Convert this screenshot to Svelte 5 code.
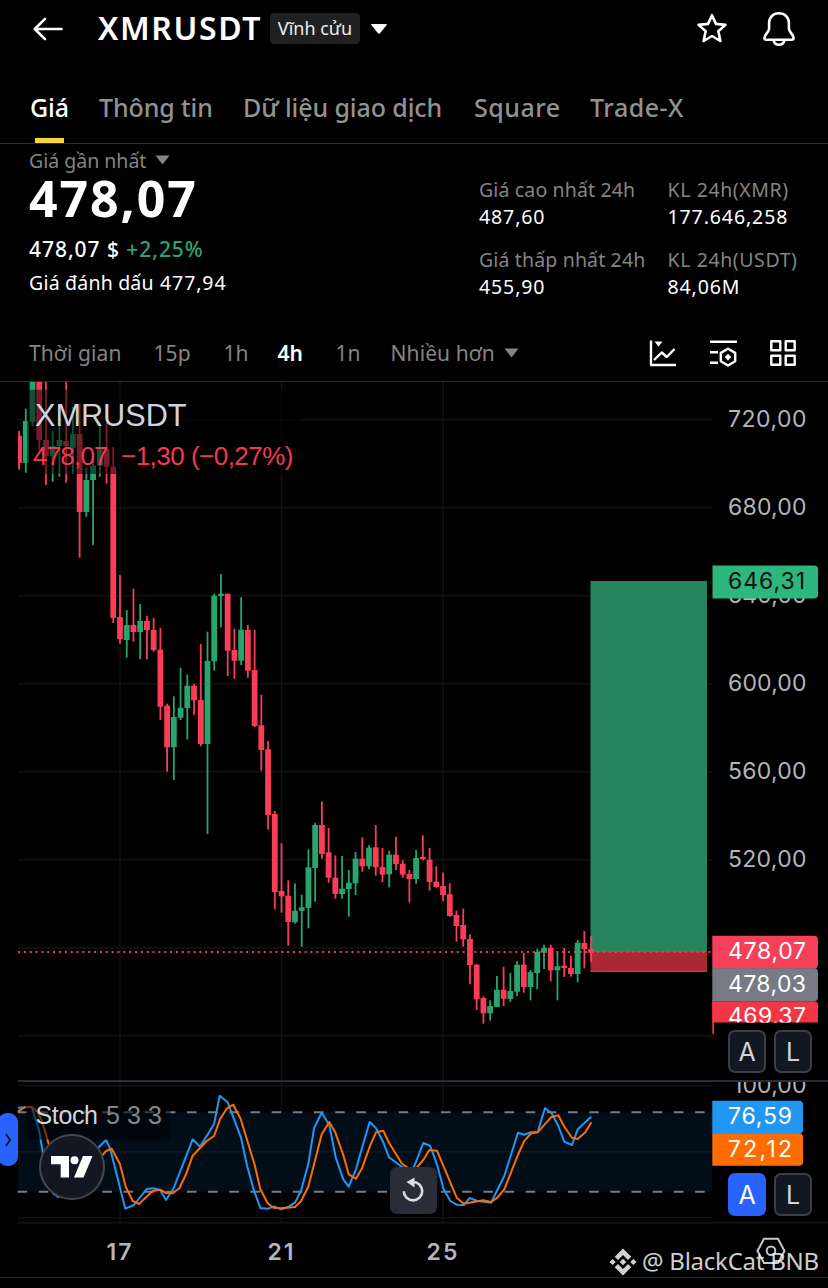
<script lang="ts">
  type Candle = [high: number, top: number, bottom: number, low: number, up: 0 | 1];

  const tabs = ["Giá", "Thông tin", "Dữ liệu giao dịch", "Square", "Trade-X"];
  const intervals = ["Thời gian", "15p", "1h", "4h", "1n", "Nhiều hơn"];
  const stats = [
    { label: "Giá cao nhất 24h", value: "487,60" },
    { label: "KL 24h(XMR)", value: "177.646,258" },
    { label: "Giá thấp nhất 24h", value: "455,90" },
    { label: "KL 24h(USDT)", value: "84,06M" },
  ];

  let activeTab = $state(0);
  let activeInterval = $state(3);

  const days = [
    { label: "17", x: 120 },
    { label: "21", x: 281.5 },
    { label: "25", x: 443 },
  ];
  const prices = [720, 680, 640, 600, 560, 520, 480, 440];
  const priceY = (price: number) => 419.7 + (720 - price) * 2.2;
  const candleX = (i: number) => 120 + (i - 15) * 6.73;

  const candles: Candle[] = [
    [431, 435.7, 463, 469.7, 0], [408.7, 421, 463, 472.7, 1], [370, 370, 421.7, 426.3, 1],
    [370, 370, 440, 450, 0], [370, 440, 456, 485, 0], [430.7, 446, 456, 481.7, 1],
    [425, 440, 446, 476.7, 1], [370, 441, 446, 482.7, 0], [407, 434, 447.7, 473.7, 1],
    [404, 434, 512, 557.7, 0], [467.7, 480, 512, 516.7, 1], [460, 465.7, 480, 545, 1],
    [425, 449, 465.7, 476.7, 1], [423, 449, 466.7, 483.7, 0], [446.7, 466.7, 618, 623, 0],
    [575, 617, 639.3, 643.7, 0], [610, 625, 640, 657.7, 1], [588.7, 625, 632, 641.7, 0],
    [604, 621, 632, 659.3, 1], [615.7, 621, 630, 659.3, 0], [617.7, 630, 650, 651.7, 0],
    [628, 649.7, 706.7, 720, 0], [703.7, 705.7, 747.3, 771.7, 0], [696.3, 717, 747.3, 780, 1],
    [667.7, 707.7, 717.7, 720, 1], [674.7, 685.7, 708, 739.3, 1], [683.7, 685.7, 700.3, 715, 0],
    [644, 700, 744, 746.3, 0], [631.7, 661, 744, 834, 1], [593.7, 595.7, 661.3, 670.7, 1],
    [574, 593.7, 596, 627.3, 1], [593.7, 593.7, 650.7, 676, 0], [628.7, 650, 660.7, 679, 0],
    [597.3, 629.7, 660.7, 665, 1], [625, 630, 670.7, 677.7, 0], [629.7, 670, 726, 727, 0],
    [694.7, 725.3, 750, 770.7, 0], [741, 749.3, 815, 829.7, 0], [811, 814, 892, 909.3, 0],
    [843.3, 891, 896.3, 912.7, 0], [880.3, 895.7, 922, 945.7, 0], [883.3, 910.7, 922.3, 923.7, 1],
    [894.7, 907.3, 911, 946.7, 1], [849.3, 867.3, 908, 928.3, 1], [823, 825, 868, 901.7, 1],
    [801.3, 825, 854, 858.7, 0], [828, 852.3, 877.7, 882.7, 0], [855.3, 877.7, 894, 898.7, 0],
    [856, 888.7, 894, 898.7, 1], [870, 882.7, 889, 916.7, 1], [852, 858.7, 883.3, 895, 1],
    [837.3, 858.7, 866.3, 871.7, 0], [845.3, 847.7, 866.3, 869.3, 1], [825, 847.3, 867.3, 875.7, 0],
    [848, 867, 874.7, 882, 0], [850.7, 854.7, 874.3, 887.3, 1], [836.7, 854.7, 864, 870, 0],
    [860.3, 863.7, 874.7, 878, 0], [870, 874, 879, 902.7, 0], [850, 858, 879, 883.7, 1],
    [835.3, 857, 859.3, 860.3, 0], [848, 859.7, 882, 890.7, 0], [866.3, 881.7, 887, 887.7, 0],
    [872.7, 886, 895, 901.3, 0], [883.3, 894.3, 916, 916.7, 0], [910.7, 915, 926, 941.7, 0],
    [908.7, 925, 939.3, 946.7, 0], [934.3, 939, 965, 984.3, 0], [964, 964.7, 999.3, 1010, 0],
    [996.3, 998, 1013.3, 1023.7, 0], [1000.3, 1006, 1013.3, 1020.7, 1], [976, 989.7, 1007, 1007, 1],
    [966.7, 989.7, 998.7, 1006, 0], [973, 991, 999, 1002, 1], [961, 964.7, 991.7, 996, 1],
    [953, 964.7, 987, 992.7, 0], [970, 972.3, 987, 1000.3, 1], [948.7, 952, 973, 989.3, 1],
    [944.7, 948, 952.7, 969, 1], [944.7, 948, 970.3, 981.3, 0], [952, 966.3, 970.3, 1000.3, 1],
    [948, 965.7, 968, 977, 0], [955.7, 968, 974, 976.7, 0], [940, 942.7, 974, 982.3, 1],
    [931, 943, 949, 968.3, 0], [936, 949, 952.7, 962.3, 0],
  ];

  const stochK =
    "18,1107.7 31.7,1107 33.3,1112 39,1130 42.7,1152 46.5,1177 53,1193.5 58.3,1197 66,1192 98.7,1147.3 106,1140 110,1148 125.3,1208.7 134,1205 146.7,1189 153.3,1188.3 160,1190 166,1200 173.3,1189 192.7,1139.3 200,1146.7 214,1124.3 219.7,1095.7 227.7,1102.3 241,1137.7 247.3,1166.7 254,1190.7 260.3,1208 268.3,1208.7 274,1206.3 281,1209.3 288.7,1206.7 295,1202.7 301,1190.7 308.3,1164 314,1128.3 321.7,1112.7 329.3,1125 335.7,1157.3 343.3,1179.3 348.7,1186.7 356,1169.3 362.3,1146.7 369.7,1122 376,1128.3 383.3,1142.3 389,1157.3 401.7,1166.7 411,1172 413.7,1167.7 423.3,1143 430,1145.7 437,1164.3 443.3,1188.3 450.3,1201 456.7,1204.7 463.7,1205 469.7,1198 477.3,1201 484.3,1201.7 491,1202.7 504.3,1176 518,1132.7 524,1134.7 531,1132.3 537.7,1132 545,1108 551.7,1113.3 558.3,1126 564.3,1141.7 572,1145 577.7,1129.3 591.3,1116.7";
  const stochD =
    "18,1111.7 25,1107 31.7,1107 37.3,1111.7 41.7,1120 49,1145 60,1180 75,1190 104,1153.3 106,1151 111.7,1148.7 120,1164.3 125.7,1186.7 132.7,1201 139,1204 152.7,1191 160,1189.7 166,1193 172.7,1193.3 179.3,1188.3 186,1174.3 192.7,1155.7 206.7,1141 214,1136 220,1119.3 227,1108.3 233.3,1104.7 240.7,1119 254.7,1165 260.3,1189 267.7,1203.3 273.3,1207.7 281.7,1208.3 295,1207 301,1201.3 308.3,1186.7 321.7,1134.3 329.3,1122 335,1131.7 343.3,1155 348.7,1174.3 356,1178.7 362.3,1167.7 369.7,1146.7 376,1132.3 383.3,1130.7 389,1142.7 401.7,1163.3 408.3,1168.3 416.7,1167.7 423.3,1160 429.3,1150 437,1150.7 456.7,1197.7 463.7,1203.7 483.3,1200.3 491,1202 497,1198 504.3,1189.3 518.3,1154 524,1141.3 531,1133.3 537.7,1132.3 551,1117.3 558.3,1115.3 564.3,1126.7 572,1137.7 577.7,1139 585.3,1132.3 591.3,1122.3";
</script>

<main>
  <header>
    <svg class="back" width="30" height="24" viewBox="0 0 30 24" aria-label="Back">
      <path d="M28.5 12H2.5M12 1.8 1.8 12 12 22.2" />
    </svg>
    <h1>XMRUSDT</h1>
    <span class="chip">Vĩnh cửu</span>
    <svg class="caret" width="18" height="12" viewBox="0 0 18 12"><path d="M1.6 1h14.8q1 0 .3 1l-6.500 8q-1.200 1.400-2.400 0L1.300 2Q.6 1 1.600 1z" /></svg>
    <div class="actions">
      <svg width="34" height="34" viewBox="0 0 34 34" aria-label="Favourite">
        <path d="m17 3.200 3.900 8.700 9.600 1-7.200 6.400 2.100 9.700-8.400-5-8.400 5 2.100-9.700-7.200-6.400 9.600-1z" />
      </svg>
      <svg width="34" height="36" viewBox="0 0 34 36" aria-label="Notifications">
        <path d="M17 2.300c-6.100 0-9.900 4.400-9.900 10v5.500c0 3-4.700 6-4.700 8.900 0 1.300.7 2 1.900 2h25.400c1.200 0 1.900-.7 1.900-2 0-2.900-4.700-5.900-4.700-8.900v-5.500c0-5.600-3.800-10-9.900-10zM11.500 29c.6 2.900 2.700 4.800 5.500 4.800s4.900-1.900 5.500-4.800" />
      </svg>
    </div>
  </header>

  <nav class="tabs">
    {#each tabs as tab, i}
      <button class:active={activeTab === i} onclick={() => (activeTab = i)}>{tab}</button>
    {/each}
  </nav>

  <section class="summary">
    <div class="quote">
      <div class="muted">
        <span>Giá gần nhất</span>
        <svg width="15" height="10" viewBox="0 0 15 10"><path d="M.5.5h14l-7 9z" /></svg>
      </div>
      <strong class="last">478,07</strong>
      <div class="change">478,07 $ <span>+2,25%</span></div>
      <div class="mark">Giá đánh dấu <span>477,94</span></div>
    </div>
    <dl>
      {#each stats as stat}
        <div>
          <dt>{stat.label}</dt>
          <dd>{stat.value}</dd>
        </div>
      {/each}
    </dl>
  </section>

  <div class="toolbar">
    <div class="intervals">
      {#each intervals as interval, i}
        <button class:active={activeInterval === i} onclick={() => (activeInterval = i)}>{interval}</button>
      {/each}
      <svg width="15" height="10" viewBox="0 0 15 10"><path d="M.5.5h14l-7 9z" /></svg>
    </div>
    <div class="tools">
      <svg width="28" height="28" viewBox="0 0 28 28">
        <path d="M2 1.500V26h25M5 21l7.800-7.500 5 4.500L25.500 10" />
        <path class="solid" d="M5.500 2.500h8l-4 5z" />
      </svg>
      <svg width="28" height="28" viewBox="0 0 28 28">
        <path d="M1 2.800h27M1 13.300h8M1 23.800h8M19 9.700l7.200 4.200v8.400L19 26.500l-7.200-4.200v-8.400z" />
        <path class="solid" d="m19 14.700 3.300 3.400-3.300 3.400-3.300-3.400z" />
      </svg>
      <svg width="28" height="28" viewBox="0 0 28 28">
        <path d="M2.300 2.300h9v9h-9zM16.700 2.300h9v9h-9zM2.300 16.700h9v9h-9zM16.700 16.700h9v9h-9z" />
      </svg>
    </div>
  </div>

  <section class="chart">
    <!-- both panes share one coordinate space, starting right under the toolbar -->
    <svg width="828" height="906" viewBox="0 382 828 906">
      <defs>
        <clipPath id="plot"><rect x="18" y="382" width="694" height="841" /></clipPath>
        <clipPath id="price-axis"><rect x="712" y="382" width="116" height="640.500" /></clipPath>
        <clipPath id="stoch-axis"><rect x="712" y="1082" width="116" height="140" /></clipPath>
      </defs>

      <g class="grid">
        {#each prices as price}
          <path d="M18 {priceY(price)}H712" />
        {/each}
        {#each days as day}
          <path d="M{day.x} 382V1223" />
        {/each}
        <path d="M18 1085.700H712M18 1217.700H712" />
      </g>
      <rect class="band" x="18" y="1112.300" width="694" height="79.400" />
      <path class="band-mid" d="M18 1151.700H712" />

      <g clip-path="url(#plot)">
        {#each candles as [high, top, bottom, low, up], i}
          <g class={up ? "up" : "down"}>
            <rect x={candleX(i) - 0.9} y={high} width="1.8" height={low - high} />
            <rect x={candleX(i) - 2.9} y={top} width="5.8" height={Math.max(bottom - top, 2)} />
          </g>
        {/each}
      </g>

      <rect class="target" x="590.500" y="581" width="116.500" height="371" />
      <rect class="stop" x="590.500" y="952" width="116.500" height="19.700" />
      <path class="stop-edge" d="M590.500 971.300H707" />
      <path class="last-line" d="M18 952H712" />
      <g class="down">
        <rect x="590.400" y="936" width="1.800" height="26" />
        <rect x="590" y="949" width="4" height="4" />
      </g>

      <path class="level" d="M17.600 1112.300H706" />
      <path class="level" d="M17.600 1191.700H706" />
      <polyline class="k" points={stochK} />
      <polyline class="d" points={stochD} />

      <path class="pane-line" d="M18 1081H828" />
      <path class="axis-line" d="M18 1222.700H828" />
      <path class="bottom-line" d="M0 1277.500H828" />

      <rect class="shade" x="27" y="389.700" width="273" height="84.300" />
      <rect class="shade" x="25.500" y="1093" width="145" height="46.500" />
      <text class="symbol" x="35" y="425.500" textLength="151.500" lengthAdjust="spacingAndGlyphs">XMRUSDT</text>
      <text class="delta" x="33" y="465" textLength="75.500">478,07</text>
      <text class="delta" x="121" y="465" textLength="172.500">−1,30 (−0,27%)</text>
      <text class="study" x="35.500" y="1124" textLength="62.500">Stoch</text>
      <text class="study params" x="106" y="1124" textLength="56">5 3 3</text>

      <g class="axis" clip-path="url(#price-axis)">
        {#each prices.slice(0, 6) as price}
          <text x="728" y={priceY(price) + 7} textLength="78.500">{price},00</text>
        {/each}
        <path class="buy" d="M712.500 565.500H814q4 0 4 4v25q0 4-4 4H712.500z" />
        <text class="dark" x="728" y="589" textLength="77">646,31</text>
        <path class="sell" d="M712.300 935.700H814q4 0 4 4v25q0 4-4 4H712.300z" />
        <text class="light" x="728" y="959" textLength="78">478,07</text>
        <path class="grey" d="M712.300 968.300H814q4 0 4 4v25q0 4-4 4H712.300z" />
        <text class="light" x="728" y="992" textLength="78">478,03</text>
        <path class="loss" d="M712.300 1001.300H814q4 0 4 4v28H712.300z" />
        <text class="light" x="728" y="1024" textLength="78">469,37</text>
      </g>
      <rect class="loss" x="712.300" y="1001.300" width="1.700" height="32.700" />

      <g class="axis" clip-path="url(#stoch-axis)">
        <text x="733" y="1092.500" textLength="73.500">100,00</text>
        <path class="blue" d="M712.300 1100.700H799q4 0 4 4v25q0 4-4 4H712.300z" />
        <text class="light" x="728" y="1124" textLength="64">76,59</text>
        <path class="orange" d="M712.300 1133.300H799q4 0 4 4v24.500q0 4-4 4H712.300z" />
        <text class="light" x="728" y="1157" textLength="64">72,12</text>
      </g>

      {#each days as day}
        <text class="day" x={day.x} y="1259.500">{day.label}</text>
      {/each}

      <path class="settings" d="M764 1238.800h14l6.500 12.200-6.500 12h-14l-6.500-12z" />
      <circle class="settings" cx="771" cy="1250.700" r="4.300" />
    </svg>

    <div class="scale">
      <button>A</button>
      <button>L</button>
    </div>
    <div class="scale lower">
      <button class="on">A</button>
      <button>L</button>
    </div>

    <button class="drawer" aria-label="Open drawing tools">
      <svg width="8" height="16" viewBox="0 0 8 16"><path d="m2 2 4 6-4 6" /></svg>
    </button>

    <div class="tv">
      <svg width="42" height="22" viewBox="0 0 42 22">
        <path d="M0 0h18v21.500H9.700V8.200H0z" />
        <circle cx="23.500" cy="4.200" r="4" />
        <path d="M32 0h9.500l-9 21.500H23z" />
      </svg>
    </div>

    <button class="reset" aria-label="Reset chart">
      <svg width="24" height="26" viewBox="0 0 24 26">
        <path class="ring" d="M2.800 14.200A9.200 9.200 0 1 0 12 5" />
        <path d="M13.500.500v10L5.500 5z" />
      </svg>
    </button>

    <div class="watermark">
      <svg width="28" height="28" viewBox="0 0 28 28">
        <path d="M14 .500 22.300 8.800 19 12.100l-5-5-5 5-3.300-3.300zM3.600 10.900 6.700 14l-3.100 3.100L.500 14zM14 10.700l3.300 3.300-3.300 3.300-3.300-3.300zM24.400 10.900l3.100 3.100-3.100 3.100-3.100-3.100zM14 27.500l-8.300-8.300L9 15.900l5 5 5-5 3.300 3.300z" />
      </svg>
      <span>@ BlackCat BNB</span>
    </div>
  </section>
</main>

<style>
  :global(body) {
    background: #000;
  }

  main {
    width: 828px;
    height: 1288px;
    overflow: hidden;
    background: #000;
    color: #fff;
    font-family: "Noto Sans", sans-serif;
  }

  main * {
    box-sizing: border-box;
  }

  button {
    padding: 0;
    border: 0;
    background: none;
    color: inherit;
    font: inherit;
    letter-spacing: inherit;
    cursor: pointer;
  }

  svg {
    display: block;
    flex: none;
  }

  header {
    display: flex;
    align-items: center;
    height: 57px;
    padding: 0 30px 0 33px;
  }

  .back path,
  .actions path {
    fill: none;
    stroke: #fff;
    stroke-width: 2.6;
    stroke-linecap: round;
    stroke-linejoin: round;
  }

  h1 {
    width: 163px;
    margin: -2px 9px 0 35px;
    font-size: 32px;
    font-weight: 600;
    letter-spacing: 1.6px;
    white-space: nowrap;
  }

  .chip {
    width: 90px;
    height: 31px;
    margin-top: -1px;
    border-radius: 4px;
    background: #202020;
    color: #eaecef;
    font-size: 18px;
    line-height: 30px;
    text-align: center;
  }

  .caret {
    margin-left: 10px;
    fill: #fff;
  }

  .actions {
    display: flex;
    align-items: center;
    gap: 33px;
    margin-left: auto;
    margin-right: 2px;
  }

  .tabs {
    display: grid;
    grid-template-columns: 69px 144px 231px 116px 120px;
    height: 87px;
    padding-left: 30px;
    border-bottom: 1px solid #2b2b2b;
    color: #929292;
    font-size: 25px;
    font-weight: 500;
    letter-spacing: -0.1px;
  }

  .tabs button {
    display: flex;
    position: relative;
    align-items: center;
    padding-bottom: 3px;
    padding-top: 16px;
    white-space: nowrap;
  }

  .tabs button:nth-child(n + 4) {
    letter-spacing: 0.5px;
  }

  .tabs .active {
    color: #fff;
  }

  .tabs .active::after {
    content: "";
    position: absolute;
    left: 5px;
    bottom: 0;
    width: 29px;
    height: 5px;
    background: #fcd535;
  }

  .summary {
    display: flex;
    height: 180px;
    padding-left: 29px;
  }

  .quote {
    display: flex;
    flex-direction: column;
    width: 450px;
    padding-top: 3px;
  }

  .muted {
    display: flex;
    align-items: center;
    gap: 9px;
    height: 26px;
    color: #848484;
    font-size: 19.5px;
  }

  .muted svg,
  .intervals svg {
    fill: #848484;
  }

  .last {
    height: 54px;
    font-size: 50px;
    font-weight: 700;
    letter-spacing: 1.9px;
    line-height: 50px;
  }

  .change {
    height: 35px;
    margin-top: 5px;
    font-size: 21px;
    font-weight: 500;
    letter-spacing: 0.95px;
    line-height: 35px;
  }

  .change span {
    color: #2aa574;
  }

  .mark {
    font-size: 19.5px;
    letter-spacing: 0.2px;
    line-height: 32px;
  }

  .mark span {
    margin-left: 1px;
    letter-spacing: 0.9px;
  }

  dl {
    display: grid;
    grid-template-columns: 188.5px 150px;
    grid-auto-rows: 69.5px;
    margin: 0;
    padding-top: 32px;
    font-size: 19.5px;
    line-height: 27px;
    white-space: nowrap;
  }

  dt {
    color: #848484;
    letter-spacing: 0.15px;
  }

  div:nth-child(even) > dt {
    letter-spacing: 0.6px;
  }

  dd {
    margin: 0;
    letter-spacing: 0.9px;
  }

  .toolbar {
    display: flex;
    justify-content: space-between;
    align-items: center;
    height: 58px;
    padding: 0 31px 0 29px;
    border-bottom: 1px solid #2b2b2b;
    color: #848484;
    font-size: 21px;
    letter-spacing: 0.1px;
  }

  .intervals {
    display: grid;
    grid-template-columns: 124.5px 70px 54px 58px 55px 113px 15px;
    align-items: center;
    white-space: nowrap;
  }

  .intervals button {
    text-align: left;
  }

  .intervals .active {
    color: #fff;
    font-weight: 600;
  }

  .tools {
    display: flex;
    gap: 32px;
  }

  .tools path {
    fill: none;
    stroke: #fff;
    stroke-width: 2.4;
    stroke-linejoin: round;
  }

  .tools .solid {
    fill: #fff;
    stroke: none;
  }

  .chart {
    position: relative;
    height: 906px;
  }

  .grid path,
  .band-mid {
    stroke: #121212;
    stroke-width: 1.5;
  }

  .band {
    fill: #020e17;
  }

  .band-mid {
    stroke: #10161f;
  }

  .up {
    fill: #27a56f;
  }

  .down {
    fill: #f93d57;
  }

  .target {
    fill: #27845f;
  }

  .stop {
    fill: #a92832;
  }

  .stop-edge,
  .last-line {
    stroke: #f23b55;
    stroke-width: 1;
  }

  .last-line {
    stroke-width: 2;
    stroke-dasharray: 2 3.85;
  }

  .level {
    stroke: #787b86;
    stroke-width: 2;
    stroke-dasharray: 9.6 11.57;
  }

  .k,
  .d {
    fill: none;
    stroke: #2196f3;
    stroke-width: 2;
    stroke-linejoin: round;
  }

  .d {
    stroke: #ff6d00;
  }

  .pane-line {
    stroke: #2a2b38;
    stroke-width: 2;
  }

  .axis-line {
    stroke: #0d1015;
    stroke-width: 2;
  }

  .bottom-line {
    stroke: #23262d;
  }

  .shade {
    fill: rgba(0, 0, 0, 0.52);
  }

  text {
    font-family: "Liberation Sans", Arial, sans-serif;
  }

  .symbol {
    fill: #d1d4dc;
    font-size: 31px;
  }

  .delta {
    fill: #f5384f;
    font-size: 26px;
  }

  .study {
    fill: #d1d4dc;
    font-size: 25px;
  }

  .params {
    fill: #85868b;
  }

  .axis text {
    fill: #b2b5be;
    font-family: Inter, sans-serif;
    font-size: 23px;
  }

  .axis .dark {
    fill: #07130e;
  }

  .axis .light {
    fill: #fff;
  }

  .buy {
    fill: #2eb67f;
  }

  .sell {
    fill: #f63f58;
  }

  .grey {
    fill: #787b86;
  }

  .loss {
    fill: #f23645;
  }

  .blue {
    fill: #2196f3;
  }

  .orange {
    fill: #ff6d00;
  }

  .day {
    fill: #b2b5be;
    font-family: Inter, sans-serif;
    font-size: 23px;
    font-weight: 600;
    letter-spacing: 2px;
    text-anchor: middle;
  }

  .settings {
    fill: none;
    stroke: #c6c8ce;
    stroke-width: 2;
  }

  .scale {
    display: flex;
    position: absolute;
    top: 648px;
    left: 728px;
    gap: 8px;
  }

  .scale.lower {
    top: 791px;
  }

  .scale button {
    width: 38px;
    height: 43px;
    border: 2px solid #3d3e44;
    border-radius: 7px;
    background: #131722;
    color: #d1d4dc;
    font-family: Inter, sans-serif;
    font-size: 25px;
  }

  .scale .on {
    border-color: #2962ff;
    background: #2962ff;
    color: #fff;
  }

  .drawer {
    display: flex;
    position: absolute;
    top: 731px;
    left: -2px;
    align-items: center;
    justify-content: center;
    width: 20px;
    height: 53px;
    border-radius: 9px;
    background: #2962ff;
  }

  .drawer svg {
    fill: none;
    stroke: #0b1220;
    stroke-width: 1.8;
  }

  .tv {
    display: grid;
    position: absolute;
    top: 752px;
    left: 39px;
    place-items: center;
    width: 66px;
    height: 66px;
    border: 2px solid #45464b;
    border-radius: 50%;
    background: #131722;
    fill: #fff;
  }

  .reset {
    display: grid;
    position: absolute;
    top: 785px;
    left: 390px;
    place-items: center;
    width: 47px;
    height: 47px;
    border-radius: 7px;
    background: #2a2c37;
    fill: #dcdde0;
  }

  .reset svg {
    margin: -2px 2px 0 0;
  }

  .reset .ring {
    fill: none;
    stroke: #dcdde0;
    stroke-width: 2.6;
  }

  .watermark {
    display: flex;
    position: absolute;
    top: 860px;
    left: 609px;
    align-items: center;
    gap: 5px;
    height: 40px;
    color: rgba(255, 255, 255, 0.82);
    font-size: 24px;
    letter-spacing: -0.25px;
    white-space: nowrap;
    fill: currentColor;
  }

  .watermark span {
    margin-top: -3px;
  }
</style>
